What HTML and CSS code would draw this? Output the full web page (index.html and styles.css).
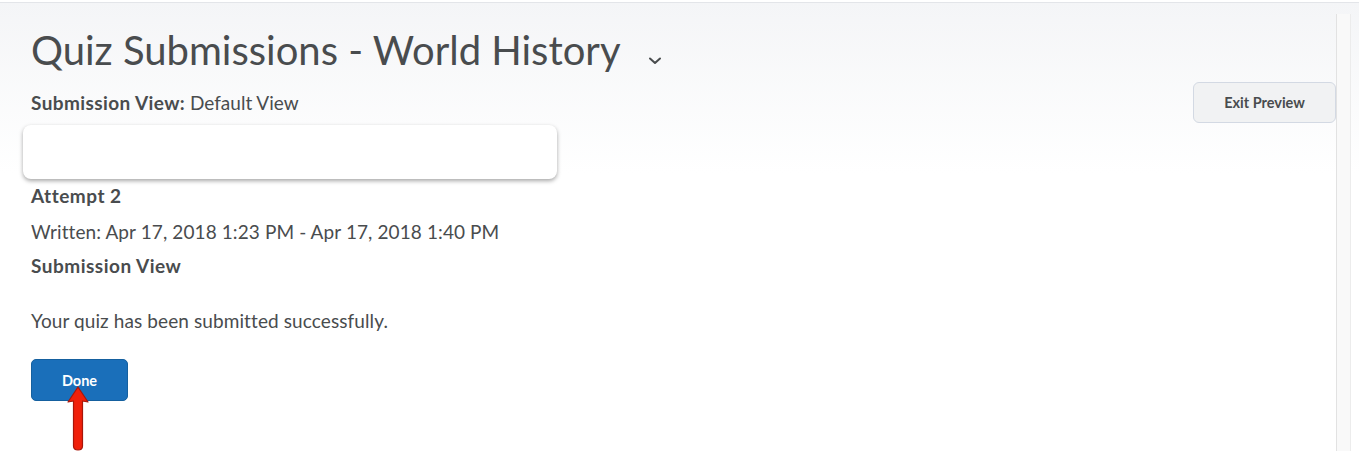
FILE: index.html
```html
<!DOCTYPE html>
<html>
<head>
<meta charset="utf-8">
<link rel="stylesheet" href="styles.css">
</head>
<body>
<div class="page">
  <main class="main">
    <div class="title-row">
      <h1 class="title">Quiz Submissions - World History</h1>
      <svg class="chev" width="14" height="8" viewBox="0 0 14 8"><path d="M2 1.5 L7 6 L12 1.5" fill="none" stroke="#494c4e" stroke-width="2" stroke-linecap="round" stroke-linejoin="round"/></svg>
    </div>
    <div class="view-row">
      <div class="view-label"><b>Submission View:</b> Default View</div>
      <button class="btn-secondary">Exit Preview</button>
    </div>
    <div class="card"></div>
    <h2 class="heading">Attempt 2</h2>
    <p class="written">Written: Apr 17, 2018 1:23 PM - Apr 17, 2018 1:40 PM</p>
    <h2 class="heading sub">Submission View</h2>
    <p class="msg">Your quiz has been submitted successfully.</p>
    <div class="done-wrap">
      <button class="btn-primary">Done</button>
      <svg class="arrow" width="24" height="66" viewBox="0 0 24 66">
        <path d="M12 1 L22 16 L16.5 15 L16.5 60 Q16.5 64 12 64 Q7.5 64 7.5 60 L7.5 15 L2 16 Z" fill="#f0200a" stroke="#a8160a" stroke-width="1.2" stroke-linejoin="round"/>
      </svg>
    </div>
  </main>
  <div class="rail"></div>
</div>
</body>
</html>
```

FILE: styles.css
```css
html, body {
  margin: 0;
  padding: 0;
  background: #ffffff;
}
body {
  font-family: Lato, "Liberation Sans", sans-serif;
  color: #494c4e;
  padding-top: 2px;
}
.page {
  display: flex;
  border-top: 1px solid #e3e5e9;
  background: linear-gradient(to bottom, #f4f5f7 0px, #ffffff 170px);
  height: 449px;
  box-sizing: border-box;
}
.main {
  flex: 1;
  padding-left: 31px;
  padding-top: 17px;
}
.rail {
  width: 13px;
  margin-top: 11px;
  margin-right: 8px;
  border-left: 1px solid #e2e2e2;
  border-right: 1px solid #ececec;
  background: #f9f9f9;
}
.title-row {
  display: flex;
  align-items: center;
  gap: 27px;
}
.title {
  margin: 0;
  font-size: 40px;
  font-weight: 400;
  line-height: 60px;
}
.chev {
  margin-top: 22px;
}
.view-row {
  display: flex;
  justify-content: space-between;
  align-items: center;
  margin-top: 2px;
}
.view-label {
  font-size: 19px;
}
.view-label b {
  letter-spacing: 0.4px;
}
.btn-secondary {
  width: 143px;
  height: 41px;
  background: #f1f2f3;
  border: 1px solid #d3d9e3;
  border-radius: 6px;
  font-family: Lato, "Liberation Sans", sans-serif;
  font-weight: 700;
  font-size: 14.5px;
  color: #494c4e;
}
.card {
  width: 534px;
  height: 54px;
  margin-left: -8px;
  margin-top: 2px;
  background: #ffffff;
  border-radius: 8px;
  box-shadow: 0 2px 4px rgba(0,0,0,0.35);
}
.heading {
  margin: 5px 0 0;
  font-size: 19px;
  font-weight: 700;
  line-height: 24px;
  letter-spacing: 0.5px;
}
.written {
  margin: 12px 0 0;
  font-size: 19px;
  line-height: 24px;
  letter-spacing: 0.1px;
}
.heading.sub {
  margin-top: 10px;
}
.msg {
  margin: 31px 0 0;
  font-size: 19px;
  line-height: 24px;
  letter-spacing: 0.1px;
}
.done-wrap {
  position: relative;
  margin-top: 26px;
}
.btn-primary {
  width: 97px;
  height: 42px;
  background: #1a6fba;
  border: 1px solid #15609f;
  border-radius: 5px;
  color: #ffffff;
  font-family: Lato, "Liberation Sans", sans-serif;
  font-weight: 700;
  font-size: 14.5px;
}
.arrow {
  position: absolute;
  left: 35px;
  top: 27px;
}
```
